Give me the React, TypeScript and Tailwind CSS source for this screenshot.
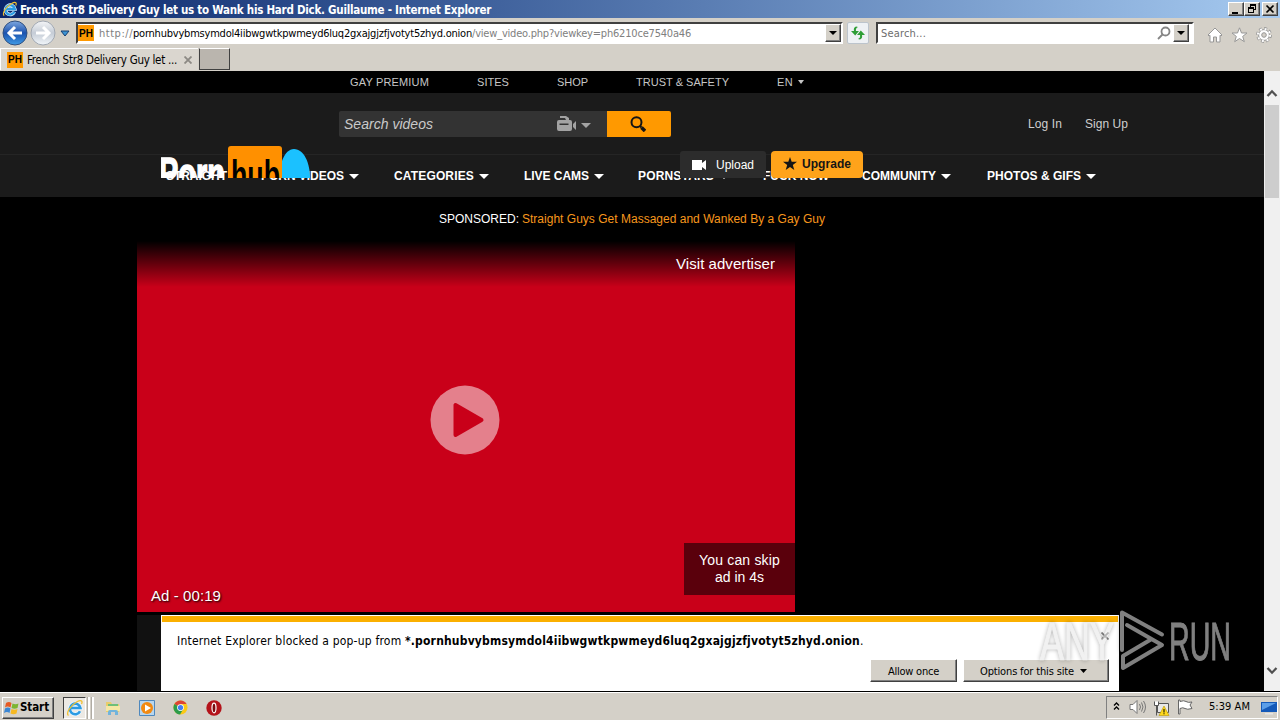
import { ReactNode, useLayoutEffect, useRef, useState } from "react";
import clsx from "clsx";

const tahoma = "font-['DejaVu_Sans_Condensed','DejaVu_Sans',sans-serif] [font-stretch:condensed]";
const arial = "font-['Liberation_Sans',sans-serif]";
const raised =
  "border border-t-white border-l-white border-r-[#404040] border-b-[#404040] shadow-[inset_-1px_-1px_0_#808080] bg-[#d4d0c8]";

interface FitProps {
  w: number;
  className?: string;
  children: ReactNode;
}

// Tracks the text so that it fills exactly `w` pixels
function Fit({ w, className, children }: FitProps) {
  const ref = useRef<HTMLSpanElement>(null);
  const [spacing, setSpacing] = useState(0);

  useLayoutEffect(() => {
    const el = ref.current;
    if (!el) return;
    const count = el.textContent?.length || 1;
    setSpacing((w - el.getBoundingClientRect().width) / count);
  }, []);

  return (
    <span className={clsx("block shrink-0", className)} style={{ width: w }}>
      <span ref={ref} className="whitespace-pre" style={{ letterSpacing: spacing }}>
        {children}
      </span>
    </span>
  );
}

function Caret({ className }: { className?: string }) {
  return (
    <svg viewBox="0 0 10 5" preserveAspectRatio="none" className={clsx("shrink-0", className)} fill="currentColor">
      <path d="M0 0h10L5 5z" />
    </svg>
  );
}

function IELogo({ className }: { className?: string }) {
  return (
    <svg viewBox="0 0 18 18" className={className} fill="none">
      <path d="M14 12.2A5.3 5.3 0 1 1 14.4 9H5" stroke="#e8f6ff" strokeWidth="4" />
      <path d="M14 12.2A5.3 5.3 0 1 1 14.4 9H5" stroke="#2b9be3" strokeWidth="2.6" />
      <path d="M2.5 16.5C-.5 14 5 6 11 2.7c4-2.2 6-.9 4.500 2.300" stroke="#f0c030" strokeWidth="1.300" />
    </svg>
  );
}

function PHIcon() {
  return (
    <span className="flex h-4 w-4 shrink-0 items-center justify-center bg-[#ff9900] font-['Liberation_Sans',sans-serif] text-[10px] font-bold text-black">
      PH
    </span>
  );
}

function TitleBar() {
  return (
    <div className="flex h-[18px] items-center bg-linear-to-r from-[#0a246a] to-[#a6caf0] pl-[2px] pr-[2px]">
      <IELogo className="mr-[2px] h-4 w-4" />
      <Fit w={471} className="pt-px text-[11.500px] leading-[18px] font-bold text-white">
        French Str8 Delivery Guy let us to Wank his Hard Dick. Guillaume - Internet Explorer
      </Fit>
      <div className="ml-auto flex">
        <div className={clsx("h-[14px] w-4", raised)}>
          <svg viewBox="0 0 14 12" className="h-3 w-[14px]"><path d="M3 9h6v2H3z" /></svg>
        </div>
        <div className={clsx("h-[14px] w-4", raised)}>
          <svg viewBox="0 0 14 12" className="h-3 w-[14px]" fill="none" stroke="#000" shapeRendering="crispEdges">
            <path d="M5 1.500h6M5.500 1v3M10.500 1v6M9 6.500h2M5 2.500h6M3 4.500h6M3 5.500h6M3.500 4v6M8.500 4v6M3 9.500h6" />
          </svg>
        </div>
        <div className={clsx("ml-[2px] h-[14px] w-4", raised)}>
          <svg viewBox="0 0 14 12" className="h-3 w-[14px]" stroke="#000" strokeWidth="1.700">
            <path d="M3.500 2.500l7 7M10.500 2.500l-7 7" />
          </svg>
        </div>
      </div>
    </div>
  );
}

function NavArrow({ back = false }: { back?: boolean }) {
  return (
    <svg viewBox="0 0 26 26" className="h-[26px] w-[26px] shrink-0">
      <defs>
        <linearGradient id="blue" x1="0" y1="0" x2="0" y2="1">
          <stop offset="0" stopColor="#7fa8e0" />
          <stop offset=".5" stopColor="#1c53ae" />
          <stop offset="1" stopColor="#3f9be6" />
        </linearGradient>
        <linearGradient id="grey" x1="0" y1="0" x2="0" y2="1">
          <stop offset="0" stopColor="#f4f5f7" />
          <stop offset=".5" stopColor="#c5ccd6" />
          <stop offset="1" stopColor="#f2f6fa" />
        </linearGradient>
      </defs>
      <circle cx="13" cy="13" r="12" fill={back ? "url(#blue)" : "url(#grey)"} stroke={back ? "#31507f" : "#a1a8b2"} />
      {back ? (
        <path d="M20 13H8M13 7l-6 6 6 6" stroke="#fff" strokeWidth="3" fill="none" />
      ) : (
        <path d="M6 13h12M13 7l6 6-6 6" stroke="#fff" strokeWidth="3" fill="none" />
      )}
    </svg>
  );
}

function DropButton() {
  return (
    <div className={clsx("flex h-[18px] w-4 shrink-0 items-center justify-center", raised)}>
      <Caret className="h-1 w-2" />
    </div>
  );
}

function Toolbar() {
  return (
    <div className="flex h-[30px] items-center pl-[2px] text-[11px]">
      <NavArrow back />
      <span className="w-[2px]" />
      <NavArrow />
      <svg viewBox="0 0 10 7" className="ml-1 mr-[6px] h-[7px] w-[10px] shrink-0">
        <path d="M1 1h8L5 6z" fill="#3c94d4" stroke="#173e70" />
      </svg>
      <div className="flex h-[22px] w-[767px] shrink-0 items-center border-2 border-t-[#404040] border-l-[#404040] border-r-white border-b-white bg-white">
        <PHIcon />
        <Fit w={34} className="ml-[5px] pt-[2px] text-[#808080]">http://</Fit>
        <Fit w={339} className="pt-[2px] text-black">pornhubvybmsymdol4iibwgwtkpwmeyd6luq2gxajgjzfjvotyt5zhyd.onion</Fit>
        <Fit w={219} className="mr-auto pt-[2px] text-[#808080]">/view_video.php?viewkey=ph6210ce7540a46</Fit>
        <DropButton />
      </div>
      <div className="ml-1 flex h-[22px] w-[22px] shrink-0 items-center justify-center rounded-[2px] border border-[#bcc4cc] bg-[#eef1f4]">
        <svg viewBox="0 0 16 16" className="h-4 w-4" fill="#2e9e36">
          <path d="M6 1.500C4 2 3.500 4 4 6H1l4.200 4.500L9 6H6c-.3-2 0-3 2-4z" />
          <path d="M10 14.500c2-.5 2.500-2.500 2-4.500h3l-4.200-4.500L7 10h3c.3 2 0 3-2 4z" />
        </svg>
      </div>
      <div className="ml-[7px] flex h-[22px] w-[318px] shrink-0 items-center border-2 border-t-[#404040] border-l-[#404040] border-r-white border-b-white bg-white pr-[3px]">
        <Fit w={45} className="ml-[3px] mr-auto pt-[2px] text-[#6d6d6d]">Search...</Fit>
        <svg viewBox="0 0 14 14" className="mr-[2px] h-[14px] w-[14px]" fill="none" stroke="#858585" strokeWidth="1.800">
          <circle cx="8.500" cy="5.500" r="4" />
          <path d="M5.500 8.500L1 13" />
        </svg>
        <DropButton />
      </div>
      <div className="ml-[13px] mt-[3px] flex items-center gap-[8px]">
        <svg viewBox="0 0 16 16" className="h-4 w-4" fill="#fff" stroke="#979797">
          <path d="M8 1l7 7-1 1-1-.7V15H9.500v-5h-3v5H3V8.300L2 9 1 8z" />
        </svg>
        <svg viewBox="0 0 17 16" className="h-4 w-[17px]" fill="#fff" stroke="#979797">
          <path d="M8.500 .8l2 5.200h5.500l-4.300 3.400 1.600 5.300-4.800-3.200-4.800 3.200 1.600-5.300L1 6h5.500z" />
        </svg>
        <svg viewBox="0 0 16 16" className="h-4 w-4" fill="none">
          <circle cx="8" cy="8" r="6.600" stroke="#979797" strokeWidth="2.600" strokeDasharray="2.900 2.280" />
          <circle cx="8" cy="8" r="5.400" fill="#fff" stroke="#979797" />
          <circle cx="8" cy="8" r="6.100" stroke="#fff" strokeWidth="2" strokeDasharray="1.900 2.890" />
          <circle cx="8" cy="8" r="2.300" fill="#d4d0c8" stroke="#979797" />
        </svg>
      </div>
    </div>
  );
}

function TabRow() {
  return (
    <div className="flex h-[23px] border-b border-[#d4d0c8] text-[11px]">
      <div className="flex w-[198px] items-center border-t border-l border-white bg-[#dad6cf] pl-[6px]">
        <PHIcon />
        <Fit w={150} className="ml-[4px] pt-[2px] text-[11.500px]">French Str8 Delivery Guy let ...</Fit>
        <svg viewBox="0 0 8 8" className="ml-[7px] h-2 w-2 shrink-0" stroke="#8c8984" strokeWidth="1.800">
          <path d="M.5 .5l7 7M7.500 .5l-7 7" />
        </svg>
      </div>
      <div className="ml-px h-[22px] w-[31px] border border-t-white border-l-[#404040] border-r-[#404040] border-b-[#404040] bg-[#bab5ae]" />
    </div>
  );
}

const topLinks = [
  { label: "GAY PREMIUM", w: 79 },
  { label: "SITES", w: 32 },
  { label: "SHOP", w: 31 },
  { label: "TRUST & SAFETY", w: 93 },
];

const navLinks = [
  { label: "STRAIGHT", w: 61, caret: false, gap: "mr-[34px]" },
  { label: "PORN VIDEOS", w: 83, caret: true, gap: "mr-[35px]" },
  { label: "CATEGORIES", w: 80, caret: true, gap: "mr-[35px]" },
  { label: "LIVE CAMS", w: 65, caret: true, gap: "mr-[34px]" },
  { label: "PORNSTARS", w: 76, caret: true, gap: "mr-[34px]" },
  { label: "FUCK NOW", w: 66, caret: false, gap: "mr-[33px]" },
  { label: "COMMUNITY", w: 74, caret: true, gap: "mr-[36px]" },
  { label: "PHOTOS & GIFS", w: 94, caret: true, gap: "" },
];

function SiteLogo() {
  return (
    <svg viewBox="0 0 150 32" className="absolute left-[161px] top-[75px] h-8 w-[150px] overflow-hidden">
      <path d="M118 32C118 20 123 3 133 3s16 14 16 29z" fill="#1bc1ff" />
      <rect x="67" y="0" width="54" height="40" rx="3" fill="#ff9000" />
      <text x="-2" y="43" textLength="66" lengthAdjust="spacingAndGlyphs" fill="#fff" stroke="#fff" strokeWidth="1.500" fontFamily="Liberation Sans" fontWeight="700" fontSize="44">
        Porn
      </text>
      <text x="70" y="43" textLength="49" lengthAdjust="spacingAndGlyphs" fill="#000" fontFamily="Liberation Sans" fontWeight="700" fontSize="41">
        hub
      </text>
    </svg>
  );
}

function SiteHeader() {
  return (
    <div className="relative">
      <div className="flex h-[22px] items-center gap-12 pl-[350px] text-[11px] text-[#c6c6c6]">
        {topLinks.map((link) => (
          <Fit key={link.label} w={link.w}>{link.label}</Fit>
        ))}
        <div className="flex items-center">
          <Fit w={16}>EN</Fit>
          <Caret className="ml-[5px] h-1 w-[6px]" />
        </div>
      </div>
      <div className="flex h-[61px] items-center bg-[#1b1b1b] pl-[339px] text-[12px] text-[#cfcfcf]">
        <div className="flex h-[26px] w-[268px] items-center rounded-l-[2px] bg-[#333] pl-[5px] pr-[16px] text-[#cacaca]">
          <Fit w={89} className="mr-auto pt-px text-[14px] italic">Search videos</Fit>
          <svg viewBox="0 0 20 16" className="h-4 w-5" fill="#a3a3a3">
            <path d="M3 0h6l3 2v2H9L8 2H3zM2 4h11a2 2 0 0 1 2 2v7a2 2 0 0 1-2 2H2a2 2 0 0 1-2-2V6a2 2 0 0 1 2-2zM16 8l3-3v9l-3-3z" />
            <path d="M2.500 7.500h9v1.500h-9z" fill="#333" />
          </svg>
          <Caret className="ml-1 mt-[3px] h-[5px] w-[10px] text-[#a3a3a3]" />
        </div>
        <div className="flex h-[26px] w-16 items-center justify-center rounded-r-[2px] bg-[#ff9900] pr-[2px]">
          <svg viewBox="0 0 16 16" className="h-4 w-4" fill="none" stroke="#151515">
            <circle cx="6.500" cy="6.200" r="5" strokeWidth="2" />
            <path d="M10 10l1.500 1.500" strokeWidth="2" />
            <path d="M11.500 11.500l3.500 3.500" strokeWidth="3.500" />
          </svg>
        </div>
        <Fit w={34} className="ml-[357px]">Log In</Fit>
        <Fit w={43} className="ml-[23px]">Sign Up</Fit>
      </div>
      <div className="flex h-[43px] items-center border-t border-[#252525] bg-[#1b1b1b] pl-[166px] text-[12px] font-bold text-white">
        {navLinks.map((link) => (
          <div key={link.label} className={clsx("flex shrink-0 items-center", link.gap)}>
            <Fit w={link.w}>{link.label}</Fit>
            {link.caret && <Caret className="ml-[5px] mt-px h-[5px] w-[10px]" />}
          </div>
        ))}
      </div>
      <SiteLogo />
      <div className="absolute left-[680px] top-[80px] flex gap-[5px] text-[12px]">
        <div className="flex h-[27px] w-[86px] items-center rounded-t-[3px] bg-[#2c2c2c] pl-3 text-white">
          <svg viewBox="0 0 14 10" className="mr-[10px] h-[10px] w-[14px]" fill="#fff">
            <path d="M0 0h10v3l4-3v10l-4-3v3H0z" />
          </svg>
          <Fit w={38}>Upload</Fit>
        </div>
        <div className="flex h-[27px] w-[92px] items-center rounded-[4px] bg-[#ffa31a] pb-[2px] pl-3 font-bold text-[#151515]">
          <svg viewBox="0 0 14 13" className="mr-[5px] h-[13px] w-[14px]" fill="#151515">
            <path d="M7 0l1.700 4.700H14l-4.200 3.200L11.300 13 7 9.900 2.700 13l1.500-5.100L0 4.700h5.300z" />
          </svg>
          <Fit w={49}>Upgrade</Fit>
        </div>
      </div>
    </div>
  );
}

function VideoAd() {
  return (
    <div className="relative ml-[137px] h-[371px] w-[658px] bg-[#c90019] text-white">
      <div className="flex h-[46px] justify-end bg-linear-to-b from-black to-transparent pr-[20px] pt-[11px]">
        <Fit w={99} className="text-[15px] leading-6">Visit advertiser</Fit>
      </div>
      <svg viewBox="0 0 70 70" className="absolute left-[293px] top-[144px] h-[70px] w-[70px]">
        <circle cx="35" cy="35" r="34.500" fill="#fff" fillOpacity=".5" />
        <path d="M25.500 20v30l26-15z" fill="#c90019" stroke="#c90019" strokeWidth="4" strokeLinejoin="round" />
      </svg>
      <div className="absolute right-0 top-[302px] flex h-[52px] w-[111px] flex-col items-center justify-center bg-[#5a000c] text-[14px] leading-[17px]">
        <Fit w={81}>You can skip</Fit>
        <Fit w={49}>ad in 4s</Fit>
      </div>
      <Fit w={70} className="absolute bottom-[4px] left-[14px] text-[15px] leading-6 [text-shadow:1px_1px_2px_#000]">
        Ad - 00:19
      </Fit>
    </div>
  );
}

function PopupNotice() {
  return (
    <div className={clsx("h-[76px] w-[958px] border border-white bg-white text-black", tahoma)}>
      <div className="h-[6px] bg-[#fbb000]" />
      <div className="flex h-[37px] items-center pl-[15px] text-[12px]">
        <Fit w={228}>{"Internet Explorer blocked a pop-up from "}</Fit>
        <Fit w={455} className="font-bold">*.pornhubvybmsymdol4iibwgwtkpwmeyd6luq2gxajgjzfjvotyt5zhyd.onion</Fit>
        <span>.</span>
        <svg viewBox="0 0 8 8" className="ml-auto mb-[10px] mr-[9px] h-2 w-2" stroke="#828282" strokeWidth="1.700">
          <path d="M.5 .5l7 7M7.500 .5l-7 7" />
        </svg>
      </div>
      <div className="flex justify-end gap-[6px] pr-[9px] text-[11px]">
        <div className={clsx("flex h-[23px] w-[87px] items-center justify-center pt-[3px]", raised)}>
          <Fit w={51}>Allow once</Fit>
        </div>
        <div className={clsx("flex h-[23px] w-[146px] items-center pl-4 pt-[3px]", raised)}>
          <Fit w={94}>Options for this site</Fit>
          <Caret className="mb-[3px] ml-[6px] h-1 w-[7px]" />
        </div>
      </div>
    </div>
  );
}

function ScrollBar() {
  return (
    <div className="flex w-4 flex-col items-center bg-[#f0f0f0]">
      <svg viewBox="0 0 12 8" className="mt-[18px] h-2 w-3 shrink-0" fill="none" stroke="#505050" strokeWidth="2.300">
        <path d="M1.500 7L6 2.300 10.500 7" />
      </svg>
      <div className="mt-[8px] h-[93px] w-[14px] bg-[#cdcdcd]" />
      <svg viewBox="0 0 12 8" className="mb-[16px] mt-auto h-2 w-3" fill="none" stroke="#505050" strokeWidth="2.300">
        <path d="M1.500 1L6 5.700 10.500 1" />
      </svg>
    </div>
  );
}

function Watermark() {
  return (
    <svg viewBox="0 0 200 64" className="absolute left-[1038px] top-[608px] h-16 w-[200px] drop-shadow-[0_0_2px_rgba(0,0,0,0.6)]" opacity=".5">
      <g fill="#fff" fontFamily="Liberation Sans" fontSize="53" strokeWidth="1">
        <text x="2" y="52" textLength="74" lengthAdjust="spacingAndGlyphs" fill="#e4e4e4" stroke="#e4e4e4">ANY</text>
        <text x="131" y="52" textLength="62" lengthAdjust="spacingAndGlyphs" stroke="#fff">RUN</text>
      </g>
      <g fill="none" stroke="#fff" strokeWidth="4" strokeLinejoin="round" strokeLinecap="round">
        <path d="M84 42V4.500l40 22" />
        <path d="M89 17l35 20-39 23V48l27-16" />
      </g>
    </svg>
  );
}

function Taskbar() {
  return (
    <div className="flex h-7 items-center border-t border-white bg-[#d4d0c8] pt-[2px] text-[11px] text-black">
      <div className={clsx("ml-[2px] flex h-[22px] w-[52px] items-center pl-px", raised)}>
        <svg viewBox="0 0 16 16" className="h-4 w-4 shrink-0">
          <path d="M2 3q3-2 5.500 0L6.500 7.500q-3-2-5.500 0z" fill="#e65a24" />
          <path d="M8.500 3.500q3 1.500 6 0l-1 4.500q-3 1.500-6 0z" fill="#7db532" />
          <path d="M1 8.500q3-2 5.500 0L5.500 13Q3 11 0 13z" fill="#3a86d4" />
          <path d="M7.500 9q3 1.500 6 0l-1 4.500q-3 1.500-6 0z" fill="#f6b922" />
        </svg>
        <Fit w={29} className="text-[11.500px] font-bold">Start</Fit>
      </div>
      <div className="ml-[9px] flex h-[22px] w-[23px] items-center justify-center border border-t-[#404040] border-l-[#404040] border-r-white border-b-white bg-[#ece9e4]">
        <IELogo className="h-[18px] w-[18px]" />
      </div>
      <span className="ml-px h-[22px] w-[3px] border-l border-[#b0aca4] bg-white" />
      <span className="ml-px h-[22px] w-[3px] border-l border-[#b0aca4] bg-white" />
      <svg viewBox="0 0 16 16" className="ml-[11px] h-4 w-4">
        <path d="M1 2h5l1 2h7v8H1z" fill="#e9cd6b" />
        <path d="M3 4h10v4H3z" fill="#6fbf7a" />
        <path d="M1 6h14v5H1z" fill="#f6e7a4" />
        <path d="M3 15v-3q0-2 2-2h6q2 0 2 2v3h-3v-3H6v3z" fill="#71b4dc" />
      </svg>
      <svg viewBox="0 0 16 16" className="ml-[18px] h-4 w-4">
        <path d="M.5 .5h15v15H.5z" fill="#b8d6ee" stroke="#4f88bd" />
        <circle cx="8" cy="8" r="6" fill="#f28a12" />
        <path d="M6 4.500v7L12 8z" fill="#fff" />
      </svg>
      <svg viewBox="0 0 16 16" className="ml-[18px] h-[15px] w-[15px]">
        <circle cx="8" cy="8" r="7.500" fill="#fbc916" />
        <path d="M8 8L1.500 4.200A7.500 7.500 0 0 1 14.500 4.200H8z" fill="#dd4435" />
        <path d="M8 8l-6.500-3.800A7.500 7.500 0 0 0 7.500 15.500L11 9.500z" fill="#2d9c4b" />
        <circle cx="8" cy="8" r="3.600" fill="#fff" />
        <circle cx="8" cy="8" r="2.800" fill="#447ef0" />
      </svg>
      <svg viewBox="0 0 16 16" className="ml-[18px] h-4 w-4">
        <circle cx="8" cy="8" r="7.700" fill="#b4131a" />
        <ellipse cx="8" cy="8" rx="2" ry="4.800" fill="#7c0a0e" stroke="#fff" strokeWidth="1.200" />
      </svg>
      <div className="ml-auto mr-[2px] flex h-[23px] w-[172px] items-center border border-t-[#808080] border-l-[#808080] border-r-white border-b-white pl-[6px]">
        <svg viewBox="0 0 7 8" className="mb-1 h-2 w-[7px]" fill="none" stroke="#000" strokeWidth="1.300">
          <path d="M1 3.500L3.500 1 6 3.500M1 7.500L3.500 5 6 7.500" />
        </svg>
        <svg viewBox="0 0 17 16" className="mb-px ml-[9px] h-4 w-[17px]" fill="none" stroke="#777">
          <path d="M1 5.500h3l4-4v13l-4-4H1z" fill="#fff" />
          <path d="M10.500 5q2 3 0 6M12.500 3.500q3 4.500 0 9M14.500 2q4 6 0 12" />
        </svg>
        <svg viewBox="0 0 17 16" className="ml-[7px] h-4 w-[17px]">
          <path d="M4.500 3.500h11v9h-11z" fill="#e8e8e8" stroke="#555" />
          <path d="M1.500 1.500v4h4v-4M3.500 5.500v10" fill="#fff" stroke="#555" />
          <path d="M11 6l5 9.500H6z" fill="#ffd91c" stroke="#b99500" strokeWidth=".6" />
          <path d="M10.500 9h1v3.500h-1zM10.500 13.300h1v1h-1z" />
        </svg>
        <svg viewBox="0 0 17 16" className="mb-px ml-[7px] h-4 w-[17px]" fill="#fff" stroke="#666">
          <path d="M1.500 1v14h1.500V9.500q3-1.500 5 0t7 0l-2-3.500 2-3q-4 1-6-.5t-6 0V1z" />
        </svg>
        <Fit w={41} className="ml-[15px]">5:39 AM</Fit>
        <svg viewBox="0 0 16 14" className="ml-[11px] h-[14px] w-4">
          <path d="M0 1h16v10H0z" fill="#1459b8" />
          <path d="M1 2h14L1 9z" fill="#5b9ee8" />
          <path d="M4 12h8v1.500H4z" fill="#e6e6e6" />
        </svg>
      </div>
    </div>
  );
}

export default function App() {
  return (
    <div className={clsx("relative flex h-[720px] w-[1280px] flex-col overflow-hidden bg-[#d4d0c8]", tahoma)}>
      <TitleBar />
      <Toolbar />
      <TabRow />
      <div className="flex h-[620px] shrink-0">
        <div className={clsx("w-[1264px] bg-black", arial)}>
          <SiteHeader />
          <div className="flex h-[44px] items-center pl-[439px] text-[12px] text-white">
            <Fit w={80}>SPONSORED:</Fit>
            <Fit w={303} className="ml-[3px] text-[#f7971d]">
              Straight Guys Get Massaged and Wanked By a Gay Guy
            </Fit>
          </div>
          <VideoAd />
          <div className="mt-[3px] flex">
            <div className="ml-[137px] h-[76px] w-6 bg-[#111]" />
            <PopupNotice />
          </div>
        </div>
        <ScrollBar />
      </div>
      <div className="h-px bg-black" />
      <Taskbar />
      <Watermark />
    </div>
  );
}
